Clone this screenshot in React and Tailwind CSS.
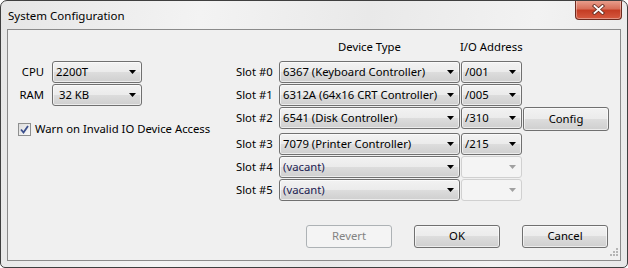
import clsx from 'clsx'

function Arrow({ disabled }) {
  return (
    <svg width="7" height="4" viewBox="0 0 7 4" className="shrink-0">
      <path d="M0 0H7L3.5 4Z" fill={disabled ? '#a0a0a0' : '#000'} />
    </svg>
  )
}

function Combo({ value, className, disabled }) {
  return (
    <div
      className={clsx(
        'flex items-center h-[22px] rounded-[3px] border pl-[3px] pr-[5px]',
        disabled
          ? 'border-[#d0d0d0] bg-[#f4f4f4]'
          : 'border-[#707070] bg-[linear-gradient(#f2f2f2_0%,#ebebeb_50%,#dddddd_50%,#cfcfcf_100%)] shadow-[inset_0_0_0_1px_rgba(255,255,255,0.6)]',
        className
      )}
    >
      <span className="flex-1 whitespace-nowrap overflow-hidden leading-[16px]">{value}</span>
      <Arrow disabled={disabled} />
    </div>
  )
}

function Button({ children, disabled, className }) {
  return (
    <div
      className={clsx(
        'flex items-center justify-center h-[23px] w-[86px] rounded-[3px] border',
        disabled
          ? 'border-[#adb2b5] bg-[#f4f4f4] text-[#838383]'
          : 'border-[#707070] bg-[linear-gradient(#f2f2f2_0%,#ebebeb_50%,#dddddd_50%,#cfcfcf_100%)] shadow-[inset_0_0_0_1px_rgba(255,255,255,0.6)]',
        className
      )}
    >
      {children}
    </div>
  )
}

const slots = [
  { name: 'Slot #0', device: '6367 (Keyboard Controller)', addr: '/001' },
  { name: 'Slot #1', device: '6312A (64x16 CRT Controller)', addr: '/005' },
  { name: 'Slot #2', device: '6541 (Disk Controller)', addr: '/310', config: true },
  { name: 'Slot #3', device: '7079 (Printer Controller)', addr: '/215' },
  { name: 'Slot #4', device: '(vacant)', vacant: true },
  { name: 'Slot #5', device: '(vacant)', vacant: true },
]

export default function App() {
  return (
    <div className="w-[628px] h-[268px] flex flex-col rounded-t-[7px] rounded-b-[5px] border border-[#3f3f3f] bg-[linear-gradient(100deg,#e6e6e6,#f3f3f3_30%,#e9e9e9_55%,#f2f2f2_80%,#e8e8e8)] font-['Noto_Sans',sans-serif] text-[11.3px] text-black overflow-hidden">
      {/* title bar */}
      <div className="h-[28px] flex items-start shrink-0">
        <span className="pl-[7px] pt-[6px] leading-[18px] text-[11.5px]">System Configuration</span>
        <div className="ml-auto mr-[5px] -mt-px w-[47px] h-[20px] rounded-b-[4px] border border-[#6e2a1e] border-t-0 bg-[linear-gradient(#eaa392_0%,#d8705a_45%,#c53d24_55%,#d65a40_100%)] flex items-center justify-center shadow-[inset_0_0_0_1px_rgba(255,255,255,0.35)]">
          <svg width="13" height="11" viewBox="0 0 13 11">
            <path d="M2.5 2L10.5 9M10.5 2L2.5 9" stroke="#6a3328" strokeWidth="3.6" strokeLinecap="square" />
            <path d="M2.5 2L10.5 9M10.5 2L2.5 9" stroke="#fff" strokeWidth="1.8" strokeLinecap="square" />
          </svg>
        </div>
      </div>

      {/* client area */}
      <div className="mx-[6px] h-[232px] border border-[#8a8a8a] bg-[#f0f0f0] flex flex-col relative">
        <div className="flex items-start">
          {/* left */}
          <div className="w-[227px] pl-[10px] pt-[31px] flex flex-col">
            <div className="flex items-center gap-[8px]">
              <span className="w-[26px] text-right">CPU</span>
              <Combo value="2200T" className="w-[90px]" />
            </div>
            <div className="flex items-center gap-[8px] mt-[1px]">
              <span className="w-[26px] text-right">RAM</span>
              <Combo value="32 KB" className="w-[90px] pl-[6px]" />
            </div>
            <div className="flex items-center mt-[15px] gap-[4px]">
              <div className="w-[13px] h-[13px] border border-[#8e8f8f] bg-[linear-gradient(135deg,#dcdcdc,#fafafa)] flex items-center justify-center">
                <svg width="9" height="9" viewBox="0 0 9 9">
                  <path d="M1 4.5L3.5 7.5L8 1" stroke="#3b4f8c" strokeWidth="1.8" fill="none" />
                </svg>
              </div>
              <span className="whitespace-nowrap">Warn on Invalid IO Device Access</span>
            </div>
          </div>

          {/* right */}
          <div className="pt-[9px] flex flex-col">
            <div className="flex h-[16px] items-center mb-[6px] whitespace-nowrap">
              <span className="w-[44px]" />
              <span className="w-[181px] text-center">Device Type</span>
              <span className="w-[62px] text-center">I/O Address</span>
            </div>
            {slots.map((s, i) => (
              <div
                key={s.name}
                className={clsx('flex items-start', i > 0 && 'mt-[1px]', i === 3 && 'mt-[2px]', s.config && 'h-[24px]')}
              >
                <span className="w-[44px] h-[22px] flex items-center pl-[1px]">{s.name}</span>
                <Combo value={s.device} className={clsx('w-[181px]', s.vacant && 'text-[#1c1c52]')} />
                <Combo value={s.addr || ''} disabled={s.vacant} className="w-[61px] ml-[1px]" />
                {s.config && <Button className="ml-[1px] h-[24px]">Config</Button>}
              </div>
            ))}
          </div>
        </div>

        <div className="mt-auto flex justify-end gap-[22px] pr-[12px] pb-[12px]">
          <Button disabled>Revert</Button>
          <Button>OK</Button>
          <Button className="w-[85px]">Cancel</Button>
        </div>

        <svg width="10" height="10" viewBox="0 0 10 10" className="absolute right-[2px] bottom-[2px]">
          {[[8, 0], [5, 3], [8, 3], [2, 6], [5, 6], [8, 6]].map(([x, y]) => (
            <rect key={`${x}-${y}`} x={x} y={y} width="2" height="2" fill="#b5b5b5" />
          ))}
        </svg>
      </div>
    </div>
  )
}
